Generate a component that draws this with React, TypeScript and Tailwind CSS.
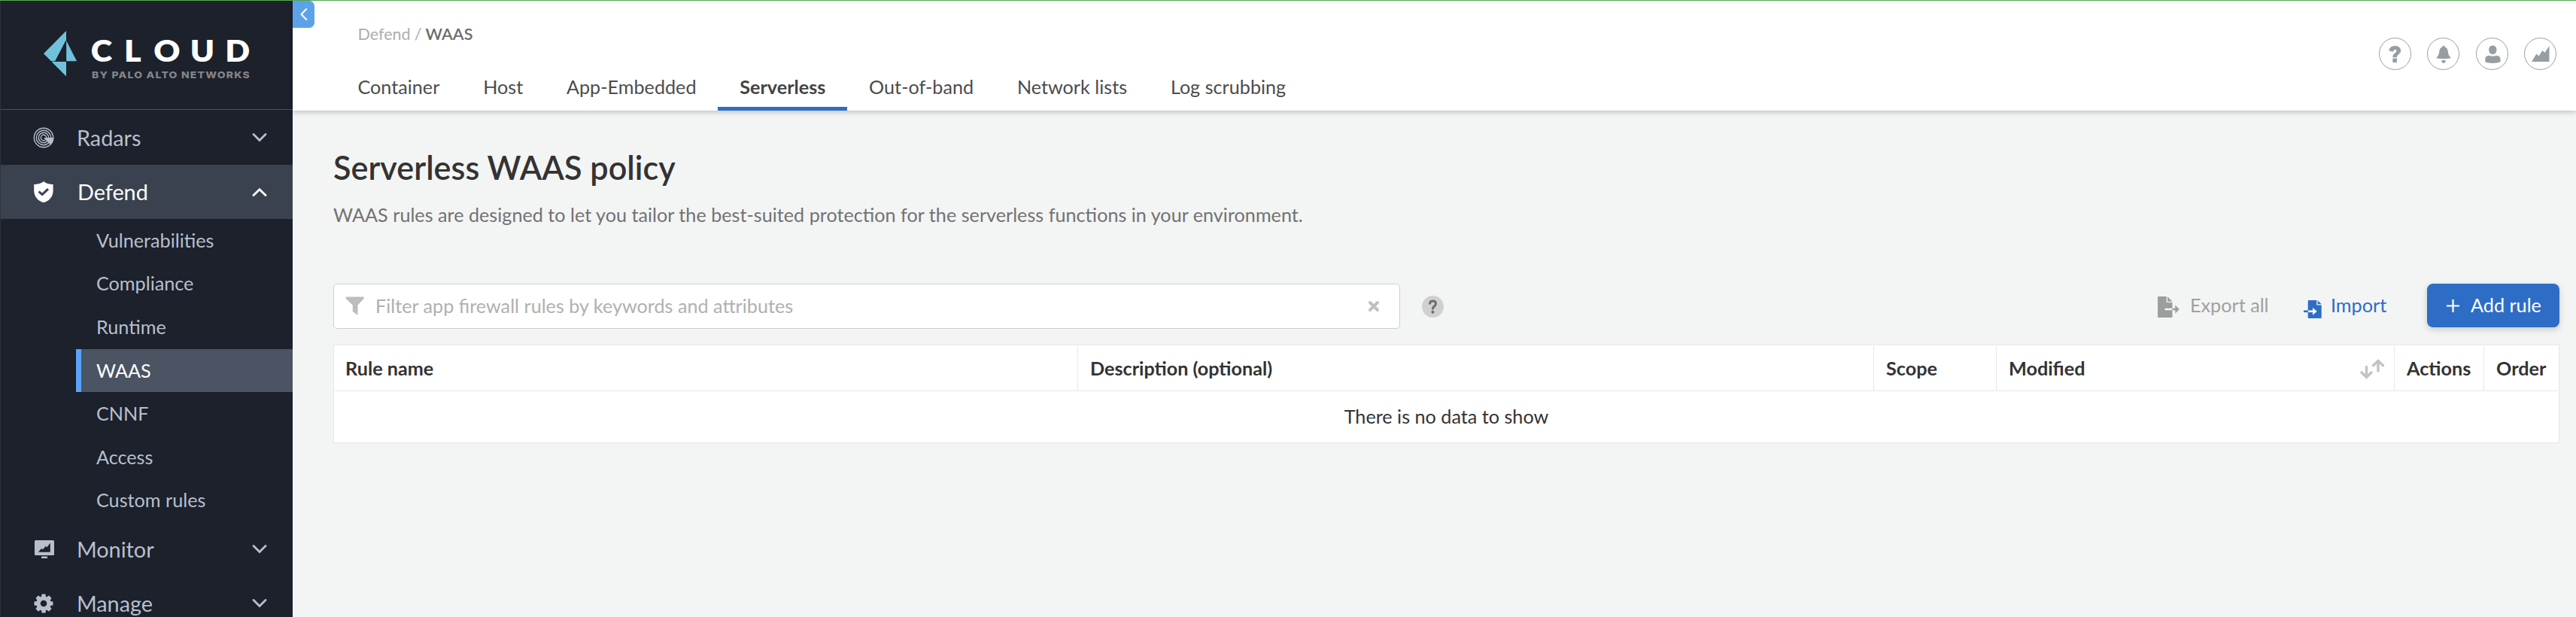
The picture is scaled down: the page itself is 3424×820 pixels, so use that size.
import React from "react";

type IconProps = { className?: string };

const Logo = () => (
  <svg width="389" height="144" viewBox="0 1 389 144" aria-label="Cloud by Palo Alto Networks">
    <g fill="#70c2dc">
      <path d="M58 71.2 88 41V53.2L73.2 81.2H68Z" />
      <path d="M88.2 54 102 81.2H88.2Z" />
      <path d="M68.6 82H88V101.4Z" />
    </g>
    <path d="M73.5 81.2 87.4 54V81.2Z" fill="#1c212c" />
    <text
      x="111.800 152.700 189.100 234 277"
      y="82"
      fill="#fff"
      fontFamily="Lato"
      fontWeight="800"
      fontSize="40"
      transform="scale(1.080 1)"
    >
      CLOUD
    </text>
    <text
      x="122"
      y="104"
      fill="#858585"
      fontFamily="Inter"
      fontWeight="800"
      fontSize="12.300"
      letterSpacing="1.100"
      textLength="211"
      lengthAdjust="spacingAndGlyphs"
    >
      BY PALO ALTO NETWORKS
    </text>
  </svg>
);

const RadarIcon = ({ className }: IconProps) => (
  <svg className={className} width="28" height="28" viewBox="0 0 28 28" fill="none" stroke="currentColor" strokeWidth="1.400">
    <circle cx="14" cy="14" r="12.700" />
    <circle cx="14" cy="14" r="9.700" />
    <circle cx="14" cy="14" r="6.700" />
    <circle cx="14" cy="14" r="3.700" />
    <path d="M14 14H27.400C27 18 26 21 23.500 23.500Z" fill="currentColor" stroke="none" />
  </svg>
);

const ShieldIcon = ({ className }: IconProps) => (
  <svg className={className} width="28" height="30" viewBox="0 0 28 30">
    <path
      d="M14 1C16 3 20 4.900 26.600 5V13C26.600 21 22 27 14 29.200C6 27 1.200 21 1.200 13V5C8 4.900 12 3 14 1Z"
      fill="currentColor"
    />
    <path d="M7.600 14.500 12 18.500 20 11.200" fill="none" stroke="#3a4250" strokeWidth="3" />
  </svg>
);

const MonitorIcon = ({ className }: IconProps) => (
  <svg className={className} width="28" height="28" viewBox="0 0 28 28" fill="currentColor">
    <rect x="2" y="2" width="26" height="20" rx="1.500" />
    <rect x="11" y="23.500" width="8" height="2.500" />
    <path d="M7 17.800 11 13 13 14.300 16.800 9.800 18.300 11.500 22.800 5.500V17.800Z" fill="#1c212c" />
  </svg>
);

const GearIcon = ({ className }: IconProps) => (
  <svg className={className} width="28" height="28" viewBox="0 0 28 28">
    <g fill="currentColor">
      <circle cx="14" cy="14" r="9.800" />
      {[0, 45, 90, 135].map((a) => (
        <rect key={a} x="11.200" y="1.500" width="5.600" height="25" rx="1.200" transform={`rotate(${a} 14 14)`} />
      ))}
    </g>
    <circle cx="14" cy="14" r="4.300" fill="#1c212c" />
  </svg>
);

const Chevron = ({ up }: { up?: boolean }) => (
  <svg width="20" height="12" viewBox="0 0 20 12" fill="none" stroke="currentColor" strokeWidth="2.800" strokeLinecap="round">
    <path d={up ? "M2 10.500 10 2.800 18 10.500" : "M2 1.600 10 9.500 18 1.600"} />
  </svg>
);

const NavRow = ({ icon, label, open }: { icon: React.ReactNode; label: string; open?: boolean }) => (
  <div
    className={
      open
        ? "-ml-px flex h-[72px] shrink-0 items-center border-l border-[#4a525f] bg-[#3a4250] pr-[34px] pl-[43px] text-white"
        : "flex h-[72px] shrink-0 items-center pr-[34px] pl-[43px] text-[#b8bfcc]"
    }
  >
    <span className={open ? "flex w-[59px] items-center" : "flex w-[58px] items-center"}>{icon}</span>
    <span className="flex-1 text-[28.8px] leading-9">{label}</span>
    <Chevron up={open} />
  </div>
);

const subItems = ["Vulnerabilities", "Compliance", "Runtime", "WAAS", "CNNF", "Access", "Custom rules"];

const Sidebar = () => (
  <aside className="flex w-[389px] shrink-0 flex-col overflow-hidden border-l border-[#2d333f] bg-[#1c212c]">
    <div className="-ml-px mb-px h-[145px] shrink-0 border-b border-[#4b525e]">
      <Logo />
    </div>
    <NavRow icon={<RadarIcon />} label="Radars" />
    <NavRow icon={<ShieldIcon />} label="Defend" open />
    <div className="flex h-[403px] shrink-0 flex-col pl-[100px] text-[25.2px]">
      {subItems.map((s) =>
        s === "WAAS" ? (
          <div key={s} className="flex h-[57.6px] items-center border-l-[7px] border-[#5ba3f8] bg-[#4a5462] pl-5 text-white">
            {s}
          </div>
        ) : (
          <div key={s} className="flex h-[57.6px] items-center pl-[27px] text-[#b8bfcc]">
            {s}
          </div>
        ),
      )}
    </div>
    <NavRow icon={<MonitorIcon />} label="Monitor" />
    <NavRow icon={<GearIcon />} label="Manage" />
  </aside>
);

const tabs = ["Container", "Host", "App-Embedded", "Serverless", "Out-of-band", "Network lists", "Log scrubbing"];

const roundButtons = [
  <path key="help" d="M13.400 17.500C14 13 17 11 21.500 11C26 11 29.200 13.500 29.200 17.300C29.200 22 24 22 24 26.300H18.300C18.300 20.500 23.300 20.700 23.300 17.700C23.300 15.500 19.500 15.300 18.900 18.800ZM18.300 27.500H24V33H18.300Z" />,
  <path key="bell" d="M22 10.500C23 10.500 23.400 11.300 23.500 12.200C26.500 13.200 27.600 15.600 27.900 19C28.200 23 29.500 24.500 31.800 27.200C25 28.600 19 28.600 12.300 27.200C14.600 24.500 15.900 23 16.200 19C16.500 15.600 17.500 13.200 20.500 12.200C20.600 11.300 21 10.500 22 10.500ZM19.200 30H24.800C24.800 32.800 23.500 34 22 34C20.500 34 19.200 32.800 19.200 30Z" />,
  <path key="user" d="M22.300 10.500C25.600 10.500 27.500 12.900 27.500 16C27.500 19.500 25.300 22.200 22.300 22.200C19.300 22.200 17.200 19.500 17.200 16C17.200 12.900 19 10.500 22.300 10.500ZM12.300 28C12.300 25.500 14.500 24.200 17.600 23.800C20 25 24.800 25 27 23.800C30 24.200 32.500 25.500 32.500 28V32.200C28 34.500 17 34.500 12.300 32.200Z" />,
  <path key="chart" d="M10 32 16.500 21.500 19.500 24.500 24.500 17 27.500 20 33.500 11V32Z" />,
];

const Header = () => (
  <header className="relative flex h-[146px] shrink-0 justify-between bg-white shadow-[0_2px_7px_rgba(0,0,0,0.22)]">
    <button className="absolute top-0 left-0 flex h-9 w-[29px] items-center justify-center rounded-r-[7px] bg-[#5da2e8]">
      <svg width="12" height="18" viewBox="0 0 12 18" fill="none" stroke="#fff" strokeWidth="2">
        <path d="M9.800 1.500 2.500 9 9.800 16.500" />
      </svg>
    </button>
    <div className="flex flex-col pl-[57.6px]">
      <nav className="flex h-[66px] gap-[5px] pt-[30px] pl-[28.8px] text-[21.6px] leading-7 text-[#aeaeae]">
        <span>Defend</span>
        <span>/</span>
        <span className="font-semibold text-[#6c6c6c]">WAAS</span>
      </nav>
      <div className="flex h-20 text-[25.2px] text-[#4c4c4c]">
        {tabs.map((t) =>
          t === "Serverless" ? (
            <div key={t} className="border-b-[5px] border-[#2e6dc6] px-[28.8px] pt-[32px] leading-8 font-bold text-[#444]">
              {t}
            </div>
          ) : (
            <div key={t} className="px-[28.9px] pt-[32px] leading-8">
              {t}
            </div>
          ),
        )}
      </div>
    </div>
    <div className="mt-[49px] mr-[26px] flex gap-[21.5px] text-[#979ea3]">
      {roundButtons.map((p, i) => (
        <svg key={i} width="43" height="43" viewBox="0 0 43 43" fill="currentColor">
          <circle cx="21.500" cy="21.500" r="21" fill="none" stroke="currentColor" />
          {p}
        </svg>
      ))}
    </div>
  </header>
);

const Toolbar = () => (
  <div className="flex h-[60px] items-start justify-between text-[25.2px]">
    <div className="flex items-center">
      <div className="flex h-[60px] w-[1418px] items-center rounded-[5px] border border-[#cfcfcf] bg-white pr-[26px] pl-[15px]">
        <svg width="26" height="28" viewBox="0 0 26 28" fill="#bdbdbd">
          <path d="M1 1.500H24.500Q25.500 2.500 24.500 4L16.500 12.500V26L9.800 21V12.500L.9 4Q0 2.500 1 1.500Z" />
        </svg>
        <span className="flex-1 pl-[14px] text-[#b0b0b0]">Filter app firewall rules by keywords and attributes</span>
        <svg width="16" height="16" viewBox="0 0 16 16" stroke="#c0c0c0" strokeWidth="4" strokeLinecap="round">
          <path d="M3 3 13 13M13 3 3 13" />
        </svg>
      </div>
      <svg className="ml-[29px]" width="29" height="29" viewBox="0 0 29 29">
        <circle cx="14.500" cy="14.500" r="14.500" fill="#d0d0d0" />
        <path
          d="M10.500 10.300C11 8 12.500 7 14.500 7C17 7 18.500 8.500 18.500 10.700C18.500 14 14.400 14 14.400 17.300"
          fill="none"
          stroke="#6e6e6e"
          strokeWidth="3"
          strokeLinecap="round"
        />
        <circle cx="14.400" cy="21.800" r="2" fill="#6e6e6e" />
      </svg>
    </div>
    <div className="flex h-[58px] items-center">
      <svg className="mt-1" width="30" height="28" viewBox="0 0 30 28" fill="#9c9e9d">
        <path d="M1 0H11.700V8H19.500V15.700H9.500V18.300H19.500V27Q19.500 28 18.500 28H1Q0 28 0 27V1Q0 0 1 0Z" />
        <path d="M13 .3 19.500 6.700H13Z" />
        <path d="M19.500 15.700H23.300V11.500L28.800 17.100 23.300 22.800V18.300H19.500Z" />
      </svg>
      <span className="w-[119px] pl-[13px] text-[#9fa1a0]">Export all</span>
      <svg className="mt-[10px] ml-[45px]" width="25" height="24" viewBox="0 0 25 24" fill="#2e6dc6">
        <path d="M6.700 0H17.300V6.500H23.700V23Q23.700 24 22.700 24H6.700Q5.700 24 5.700 23V1Q5.700 0 6.700 0Z" />
        <path d="M18.700 .3 23.700 5.300H18.700Z" />
        <rect x="0" y="13.500" width="6" height="2.600" />
        <path d="M6 13.500H12V10L17.700 14.800 12 19.700V16.100H6Z" fill="#fff" />
      </svg>
      <span className="w-[139px] pl-[11px] text-[#2e6dc6]">Import</span>
      <button className="flex h-[58px] w-44 items-center rounded-[8px] bg-[#2e6dc6] pl-[26px] text-white shadow-[0_3px_8px_rgba(0,0,0,0.18)]">
        <svg width="17" height="17" viewBox="0 0 17 17" stroke="#fff" strokeWidth="2.200">
          <path d="M0 8.500H17M8.500 0V17" />
        </svg>
        <span className="pl-[15px]">Add rule</span>
      </button>
    </div>
  </div>
);

const Table = () => (
  <div className="mt-[21px] border border-[#e6e7e7] bg-white p-px text-[25.2px] text-[#333]">
    <div className="grid h-[60px] grid-cols-[988px_1058px_163px_529px_119px_1fr] border-b border-[#e6e7e7] leading-[58px] font-bold">
      <div className="border-r border-[#e6e7e7] pl-[14px]">Rule name</div>
      <div className="border-r border-[#e6e7e7] pl-[16px]">Description (optional)</div>
      <div className="border-r border-[#e6e7e7] pl-[16px]">Scope</div>
      <div className="flex items-center justify-between border-r border-[#e6e7e7] pr-3 pl-[16px]">
        <span className="self-start">Modified</span>
        <svg width="34" height="28" viewBox="0 0 34 28" fill="none" stroke="#c3c3c3" strokeWidth="3.400" strokeLinecap="round">
          <path d="M9.500 11.500V25M3 19 9.500 25.300 16 19M25 17V4M18.500 9.800 25 3.500 31.500 9.800" />
        </svg>
      </div>
      <div className="border-r border-[#e6e7e7] pl-[16px]">Actions</div>
      <div className="pl-[16px]">Order</div>
    </div>
    <div className="h-[67px] text-center leading-[67px]">There is no data to show</div>
  </div>
);

export default function App() {
  return (
    <div className="flex h-[820px] w-[3424px] flex-col overflow-hidden bg-[#f3f5f4] font-[Lato,sans-serif]">
      <div className="h-px shrink-0 bg-[#54b04f]" />
      <div className="flex min-h-0 flex-1">
        <Sidebar />
        <div className="flex min-w-0 flex-1 flex-col">
          <Header />
          <main className="flex flex-col pr-[22px] pl-[54px]">
            <h1 className="pt-[47px] text-[43.2px] leading-[56px] font-semibold text-[#333]">Serverless WAAS policy</h1>
            <p className="pt-[19px] pb-[76px] text-[25.2px] leading-8 text-[#727272]">
              WAAS rules are designed to let you tailor the best-suited protection for the serverless functions in your
              environment.
            </p>
            <Toolbar />
            <Table />
          </main>
        </div>
      </div>
    </div>
  );
}
